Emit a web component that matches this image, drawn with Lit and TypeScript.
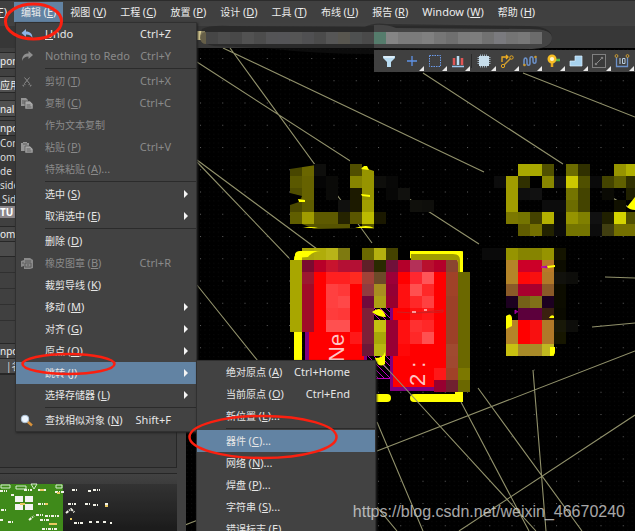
import { LitElement, html, svg, css, nothing } from "lit";
import { customElement, property } from "lit/decorators.js";
import { classMap } from "lit/directives/class-map.js";

interface Item {
  label?: string;
  key?: string;
  text?: string;
  shortcut?: string;
  icon?: string;
  disabled?: boolean;
  arrow?: boolean;
  active?: boolean;
  sep?: boolean;
  children?: Item[];
}

const SEP: Item = { sep: true };

const JUMP: Item[] = [
  { label: "绝对原点", key: "A", shortcut: "Ctrl+Home" },
  { label: "当前原点", key: "O", shortcut: "Ctrl+End" },
  { label: "新位置", key: "L", text: "..." },
  SEP,
  { label: "器件", key: "C", text: "...", active: true },
  { label: "网络", key: "N", text: "..." },
  { label: "焊盘", key: "P", text: "..." },
  { label: "字符串", key: "S", text: "..." },
  { label: "错误标志", key: "E" },
];

const EDIT: Item[] = [
  { text: "Undo", shortcut: "Ctrl+Z", icon: "undo" },
  { text: "Nothing to Redo", shortcut: "Ctrl+Y", icon: "redo", disabled: true },
  SEP,
  { label: "剪切", key: "T", shortcut: "Ctrl+X", icon: "cut", disabled: true },
  { label: "复制", key: "C", shortcut: "Ctrl+C", icon: "copy", disabled: true },
  { label: "作为文本复制", disabled: true },
  { label: "粘贴", key: "P", shortcut: "Ctrl+V", icon: "paste", disabled: true },
  { label: "特殊粘贴", key: "A", text: "...", disabled: true },
  SEP,
  { label: "选中", key: "S", arrow: true },
  { label: "取消选中", key: "E", arrow: true },
  SEP,
  { label: "删除", key: "D" },
  { label: "橡皮图章", key: "B", shortcut: "Ctrl+R", icon: "stamp", disabled: true },
  { label: "裁剪导线", key: "K" },
  { label: "移动", key: "M", arrow: true },
  { label: "对齐", key: "G", arrow: true },
  { label: "原点", key: "O", arrow: true },
  { label: "跳转", key: "J", arrow: true, active: true, children: JUMP },
  { label: "选择存储器", key: "L", arrow: true },
  SEP,
  { label: "查找相似对象", key: "N", shortcut: "Shift+F", icon: "find" },
];

const BAR: Item[] = [
  { label: "编辑", key: "E", active: true, children: EDIT },
  { label: "视图", key: "V" },
  { label: "工程", key: "C" },
  { label: "放置", key: "P" },
  { label: "设计", key: "D" },
  { label: "工具", key: "T" },
  { label: "布线", key: "U" },
  { label: "报告", key: "R" },
  { text: "Window ", key: "W" },
  { label: "帮助", key: "H" },
];

const MENU_ICONS: Record<string, unknown> = {
  undo: svg`<path d="M1.500 5 6 1v2.500c4 0 6.500 2 6.500 7-1-2.500-3-4-6.500-4V9z" fill="#8db4e8"/>`,
  redo: svg`<path d="M13 5 8.500 1v2.500C4 3.500 2 6 2 11c1-3 3-4.500 6.500-4.500V9z" fill="#8f8f8f"/>`,
  cut: svg`<path d="M4.500 2.500l5 6M9.500 2.500l-5 6" stroke="#8a8a8a" stroke-width="1" fill="none"/><path d="M3 11l2-2M11 11 9 9" stroke="#8a8a8a" stroke-width="2" stroke-dasharray="1 1"/>`,
  copy: svg`<path d="M1 1h5l2 2v6H1z" fill="#969696"/><path d="M5 4h5l3 3v5H5z" fill="#a8a8a8" stroke="#444" stroke-width=".6"/><path d="M2 4h3M2 6h3M6.500 8h4M6.500 10h5" stroke="#5c5c5c"/>`,
  paste: svg`<path d="M1 2h2V1h4v1h2v8H1z" fill="#969696"/><path d="M5 5h5l3 3v4H5z" fill="#a8a8a8" stroke="#444" stroke-width=".6"/><path d="M3 3h4M6.500 8h4M6.500 10h5" stroke="#5c5c5c"/>`,
  stamp: svg`<path d="M4 1h6l3 2v8l-3 1H4V9L1 10V4l3-1z" fill="#8a8a8a"/><path d="M5 4h6M5 6h6v4H5zM7 8h2M2 6h2" stroke="#5a5a5a" fill="none"/>`,
  find: svg`<path d="M7.500 7.500 12 11.500" stroke="#d9923a" stroke-width="2.400"/><circle cx="5" cy="5" r="3.800" fill="#eef6ff" stroke="#a9bfd4"/>`,
};

@customElement("menu-panel")
export class MenuPanel extends LitElement {
  @property({ attribute: false }) items: Item[] = [];

  static styles = css`
    :host {
      display: block;
      box-sizing: border-box;
      border: 1px solid #303030;
      background: #424242;
      box-shadow: 1px 1px 2px #222;
    }
    .entry { position: relative; }
    .row {
      display: grid;
      grid-template-columns: 29px 1fr auto 25px;
      align-items: center;
      width: 100%;
      height: 22px;
      padding: 0;
      border: 0;
      background: none;
      color: #e6e6e6;
      font: 11px/20px "Noto Sans", "Noto Sans CJK SC", sans-serif;
      text-align: left;
      white-space: nowrap;
    }
    .row:disabled { color: #8a8a8a; }
    .row.active { background: #6283a3; }
    .cjk { font-size: 10px; }
    .icon { display: block; width: 14px; height: 13px; margin-left: 4px; }
    .arrow { width: 4px; height: 8px; margin-left: 13px; fill: #f4f4f4; }
    .sep { height: 1px; margin: 1px 0 1px 29px; border: 0; background: #2b2b2b; }
    .sub { position: absolute; left: 100%; top: -2px; width: 180px; z-index: 1; }
  `;

  private row(i: Item) {
    if (i.sep) return html`<hr class="sep" />`;
    return html`<div class="entry">
      <button class=${classMap({ row: true, active: !!i.active })} role="menuitem" ?disabled=${i.disabled}>
        <span>${i.icon ? html`<svg class="icon" viewBox="0 0 14 13">${MENU_ICONS[i.icon]}</svg>` : nothing}</span>
        <span>${menuText(i)}</span>
        <span>${i.shortcut ?? nothing}</span>
        ${i.arrow ? html`<svg class="arrow" viewBox="0 0 4 8"><path d="M0 0 4 4 0 8z" /></svg>` : html`<span></span>`}
      </button>
      ${i.children ? html`<menu-panel class="sub" role="menu" .items=${i.children}></menu-panel>` : nothing}
    </div>`;
  }

  render() {
    return this.items.map((i) => this.row(i));
  }
}

function menuText(i: Item) {
  if (i.text === "Undo") return html`<u>U</u>ndo`;
  if (!i.label) return html`${i.text}${i.key ? html`(<u>${i.key}</u>)` : nothing}`;
  return html`<span class="cjk">${i.label}${i.key ? " " : nothing}</span>${i.key ? html`(<u>${i.key}</u>)` : nothing}${i.text ?? nothing}`;
}

/* Toolbar glyphs, drawn on a 16 x 16 grid */
const TOOLS: { name: string; art: unknown }[] = [
  { name: "Filter", art: svg`<path d="M2 3h12v2l-4 4v5H6V9L2 5z" fill="#b9dcf2"/><path d="M3 4h10" stroke="#fff"/>` },
  { name: "Cross", art: svg`<path d="M8 3v10M3 8h10" stroke="#5f92e6" stroke-width="1.300"/>` },
  { name: "Select area", art: svg`<rect x="2.500" y="2.500" width="11" height="11" fill="none" stroke="#6b9bea" stroke-dasharray="1.500 1"/>` },
  { name: "Align", art: svg`<path d="M2 13.500h12" stroke="#9cc6ee" stroke-width="1.500"/><path d="M4 5v7M12 5v7" stroke="#e05656" stroke-width="2.500"/><path d="M8 3v9" stroke="#b9dcf2" stroke-width="2.500"/>` },
  { name: "Component", art: svg`<path d="M4.500 1.500v13M6.500 1.500v13M8.500 1.500v13M10.500 1.500v13M1.500 4.500h13M1.500 6.500h13M1.500 8.500h13M1.500 10.500h13" stroke="#a9bcc8" stroke-width=".9"/><rect x="3" y="3" width="10" height="10" fill="#c6dcea"/>` },
  { name: "Route", art: svg`<path d="M3 9V4h6M7 2l2 2-2 2" fill="none" stroke="#f0ae22" stroke-width="1.300"/><path d="M4 13 12 5" stroke="#cc9d35" stroke-width="1.500"/><circle cx="4" cy="13" r="1.700" fill="#424242" stroke="#e5a820"/><circle cx="12.500" cy="4.500" r="1.700" fill="#424242" stroke="#e5a820"/>` },
  { name: "Tune", art: svg`<path d="M2 12V8c0-4 3-4 3 0v2c0 3 3 3 3 0V6c0-3 3-3 3 0v2c0 3 3 3 3 0V5" fill="none" stroke="#6c91c9" stroke-width="1.500"/><circle cx="2.500" cy="12" r="1.300" fill="#c99a32"/><circle cx="13.500" cy="4" r="1.300" fill="#c99a32"/>` },
  { name: "Via", art: svg`<path d="M8 7h7" stroke="#57b947" stroke-width="2.500"/><path d="M7 9v5" stroke="#e5a820" stroke-width="2.500"/><circle cx="7" cy="6" r="3.300" fill="#fff7d0" stroke="#f6bd24" stroke-width="2.400"/>` },
  { name: "Polygon", art: svg`<path d="M2 8h5V3h7v10H2z" fill="#a7d2ee" stroke="#d8efff" stroke-width=".7"/>` },
  { name: "Line", art: svg`<rect x="1.500" y="1.500" width="13" height="13" fill="#3a3a3a" stroke="#808080"/><path d="M5 11l6-6" stroke="#8a8a8a"/><circle cx="5" cy="11" r="1.300" fill="#808080"/><circle cx="11" cy="5" r="1.300" fill="#808080"/>` },
  { name: "Dimension", art: svg`<path d="M2.500 4v9.500h11V4" fill="none" stroke="#6c91c9" stroke-width="1.300"/><circle cx="2.500" cy="3" r="1.400" fill="none" stroke="#c99a32"/><circle cx="13.500" cy="3" r="1.400" fill="none" stroke="#c99a32"/><path d="M6 5v6M8.500 5.500h2.500v5H8.500z" fill="none" stroke="#b9cde0"/>` },
];

/* Tile runs on a 12px lattice: x, y, then a colour per tile ("-" leaves a gap) */
type Run = [number, number, string];
const TILES: Run[] = [
  [290, 164, "484600 6a6600 0e0e0c - - 504e00 969400"],
  [290, 176, "5a5800 666200 050505 0a0a08 - 868400 969400 0e0e0b 080807"],
  [290, 188, "4f4d00 666200 - 0a0a08 - 1c1a00 969400 - 070706 11110e"],
  [290, 200, "4b4900 5e5c00 - - 10100e 1c1a00 a09e00 - - - 10100c 0e0e0b"],
  [290, 212, "605e00 a09c00 5e5a00 5e5a00 252300 5a5600 bcba00 1a1800"],
  [302, 248, "aaa60a b0ac0a b8b418 7e7a10 000000 6a6800 b4b00f 444200 000000"],
  [290, 260, "a8a600 7a0b30 b80028 c8142e b41034 b41034 5e2028 2a2a00 70103a b4002a b43058 b8102e b4002a 8a4430"],
  [290, 272, "a8a600 9c1830 ff0000 ff2020 ff2020 ff2a20 a04238 6c4a28 9c0038 ff0000 ff2830 ff5558 ff0000 a04228 6b6800"],
  [290, 284, "a8a600 a00c28 ff0000 ff4040 ff3838 ff0000 903c40 a88e20 940034 ff1010 ff5050 ff2828 ff0000 a04228 6b6800"],
  [290, 296, "a8a600 a00c28 ff0000 ff4040 ff4848 ff0000 700a3c aca014 98002e ff1010 ff2828 ff4040 ff0000 9c4028 6b6800"],
  [290, 308, "a8a600 a00c28 ff0000 ff3c3c ff3838 ff0000 7c2038 - - ff0000 ff1010 ff1818 ff0000 9c4028 6b6800"],
  [290, 320, "a8a600 a00c28 ff0000 ff5050 ff5050 ff0000 7c2038 c4c010 980034 ff1010 ff3030 ff2828 ff0000 9c4028 6b6800"],
  [350, 332, "ff1818 7c2038 a8a808 980034 ff1010 ff2828 ff5050 ff0000 9c4028 6b6800"],
  [362, 344, "6c1838 b8b810 980034 ff0808 ff0000 ff0000 ff0000 a04a30 6b6800"],
  [446, 356, "a04830 6b6800"],
  [434, 368, "ff1818 a04228 7c7800"],
  [434, 380, "980030 702030 6b6800"],
  [518, 164, "a8a800 a8a800 505000 - 6c6c00 303000 - - 969400 b0b000"],
  [494, 176, "0c0c0c a09c00 303000 000000 888600 111111 ccc800 505000 0a0a0a 444400 606000 303000"],
  [506, 188, "a09c00 0e0e0e 111111 - - 747400 444400 - 0a0a04 - 202000"],
  [506, 200, "a09c00 - - 0c0c0c 0c0c0c 6c6c00 444400 - - 101000"],
  [506, 212, "7c7800 747400 444200 b4b000 0a0a08 969400 808000 111111 202000 d4d400 505000"],
  [518, 224, "605c00 747000 222200 0a0a0a 747400 747400 0c0c0c 403e10 747000 747000"],
  [482, 248, "0a0a0a 0a0a0a 969400 868400 868400 969400 141400"],
  [506, 260, "b48428 cc0028 cc0028 b87828 0c0c00"],
  [506, 272, "b48428 ff0808 f81010 b07828 11110c 0d0d0a"],
  [506, 284, "8a5a28 a8002e a8002e 8a5a28 0c0c00"],
  [506, 296, "1c0020 746018 807018 1c0020 0c0c00"],
  [518, 308, "5c003c 5c003c 3a2010 0a0a00"],
  [506, 320, "b48428 ff0000 f81010 b07828 181808 0d0d0a"],
  [506, 332, "b48428 ff0000 f81010 b07828 161600"],
  [506, 344, "c8c010 a88a28 a88a28 c0b820"],
];

const tiles = (runs: Run[]) =>
  runs.map(([x, y, c]) =>
    c.split(" ").map((fill, n) =>
      fill === "-" ? nothing : svg`<rect x=${x + n * 12} y=${y} width="12" height="12" fill=${"#" + fill} />`,
    ),
  );

/* Unrouted connections */
const WIRES = `M223 48 484 172M230 48 372 243M197 62 479 244M197 160 317 249M197 162 289 258M197 285 258 361
M423 73 563 164M523 73 635 117M611 197 630 208M605 277 635 278M592 327 635 323M377 451 635 351M533 370 546 531
M478 388 582 531M461 402 529 531M382 363 536 531M377 422 423 531M377 507 397 531M459 531 635 415M185 525 198 520`;

@customElement("board-view")
export class BoardView extends LitElement {
  static styles = css`
    :host { display: block; background: #000; overflow: hidden; }
    .art { display: block; width: 100%; height: 100%; }
    .net { font: 22px "Liberation Sans", sans-serif; fill: #ffc4c4; }
  `;

  render() {
    return html`<svg class="art" viewBox="186 48 449 483" preserveAspectRatio="xMinYMin slice">
      <defs>
        <pattern id="dots" x="200" y="58" width="22.250" height="22.250" patternUnits="userSpaceOnUse">
          <rect width="1" height="1" fill="#5c5c5c" />
        </pattern>
        <pattern id="fine" x="200" y="58" width="4.450" height="4.450" patternUnits="userSpaceOnUse">
          <rect width="1" height="1" fill="#0b0b0b" />
        </pattern>
        <pattern id="hatch" width="6" height="6" patternUnits="userSpaceOnUse">
          <path d="M0 0 6 6" stroke="#c000c0" stroke-width="1" />
        </pattern>
      </defs>
      <rect x="186" y="48" width="1200" height="900" fill="url(#fine)" />
      <rect x="186" y="48" width="1200" height="900" fill="url(#dots)" />
      <path d="M298 394V260q0-5 5-5h20M413 255h42q4 0 4 4v139h-45M387 398H298v-6" fill="none" stroke="#ff0" stroke-width="8" stroke-linecap="round" />
      <rect x="305" y="262" width="63" height="130" fill="#800080" />
      <rect x="309" y="262" width="55" height="130" fill="#f00" />
      <rect x="367" y="300" width="23" height="79" fill="#000" />
      <rect x="367" y="300" width="23" height="79" fill="url(#hatch)" />
      <path d="M367 378.500h24" stroke="#c000c0" />
      <path d="M390 300h63v91h-63z" fill="#800080" />
      <path d="M393 300h60v87h-60z" fill="#f00" />
      <path d=${WIRES} fill="none" stroke="#91916b" stroke-width="1.100" />
      ${tiles(TILES)}
      <path d="M286 160h16l14 5-26 4zM290 193l12 3-3 6-9 3zM350 164h12v3l12 4v-7h4v-4h-28z" fill="#000" />
      <path d="M290 224h12l12 5 48-1 12 1v-5h-12v4h-12v-4z" fill="#565300" />
      <path d="M361 169l3-3h3l2 4zM298 199l7 1v2h-6zM361 194l9 1v2l-8-1zM303 228q8-2 15 0zM355 228q12-4 19 0z" fill="#ff0" />
      <path d="M295 258v-4q1-3 5-3h21q-8 0-13 6z" fill="#ff0" />
      <path d="M410 248h53v24h-5v-9q0-6-6-6h-42z" fill="#ff0" />
      <path d="M411 254h42q7 0 7 6v12h-2v-12h-47z" fill="#a09c00" />
      <path d="M410 247h55v7q0-3-4-3h-51z" fill="#000" />
      <path d="M372 312q10-8 14 5-8 0-14-5zM375 358q8 0 10-6v12q-7 5-10-6zM506 316q5-4 6 2v8l-6 3zM549 318q2-4 5-2v2zM550 356v-9h5v5q0 4-5 4z" fill="#ff0" />
      <path d="M627 207 635 197v13q-5 0-8-3z" fill="#ff0" />
      <path d="M397 312l18 1 28-3v2l-30 1" fill="none" stroke="#d02020" />
      <path d="M412 312h4M424 310h3" stroke="#ffc4c4" stroke-width="1.500" />
      <path d="M541 267l6-1v2zM515 314v-4l3 2" fill="#800080" stroke="#c000c0" stroke-width=".8" />
      <path d="M547 266l8-1v2l-7 1z" fill="#ff0" />
      <text class="net" transform="translate(344 362) rotate(-90)">Ne</text>
      <text class="net" transform="translate(425 386) rotate(-90)">2 :</text>
    </svg>`;
  }
}

const PARTS_MARKS = `M1 485h9v3H1zM16 486h10v3H16zM31 484l6 0-3 5zM56 485h6v3h-6z`;
const BOARD_SPECKS = `M0 491h7M24 490h8M38 490h8M55 492h9M38 504h10M11 495h3M1 510h6M0 520h3M8 522h5M29 520l5-4M36 515h7M45 516h14M40 520h10
M72 490h6M88 491h3M93 490h7M68 504h8M85 504h6M93 505h6M105 504h3M66 513l5-4 4 4M74 523h9M89 522h4M96 522h4M103 522h3M110 523h2M42 529h16`;

@customElement("app-root")
export class AppRoot extends LitElement {
  static styles = css`
    :host {
      position: relative;
      display: grid;
      grid-template-rows: 23px 25px 1fr;
      height: 100vh;
      overflow: hidden;
      background: #383838;
      color: #dcdcdc;
      font: 11px/14px "Noto Sans", "Noto Sans CJK SC", sans-serif;
    }
    .bar {
      display: flex;
      align-items: stretch;
      box-sizing: border-box;
      padding: 1px 0;
      background: #404040;
      border-top: 1px solid #2c2c2c;
      position: relative;
      z-index: 3;
    }
    .drop { position: relative; }
    .top {
      height: 100%;
      padding: 0 7px;
      border: 0;
      background: none;
      color: #ececec;
      font: inherit;
      white-space: nowrap;
    }
    .first { width: 14px; padding: 0; overflow: hidden; direction: rtl; unicode-bidi: isolate; }
    .first-text { direction: ltr; unicode-bidi: isolate; margin-right: 7px; }
    .top.active { background: #6283a3; }
    .cjk { font-size: 10px; }
    .menu { position: absolute; left: 1px; top: 100%; width: 182px; }
    .strip { background: #373737; border-top: 3px solid #414141; box-sizing: border-box; }
    .main { display: grid; grid-template-columns: 186px 1fr; min-height: 0; }
    .side {
      display: flex;
      flex-direction: column;
      box-sizing: border-box;
      padding-right: 9px;
      background: #404040;
      overflow: hidden;
      white-space: nowrap;
    }
    .field {
      box-sizing: border-box;
      width: 100%;
      height: 17px;
      margin: 4px 0 3px;
      padding: 0;
      border: 1px solid #272727;
      border-left: 0;
      background: #505050;
      color: #f0f0f0;
      font: inherit;
      font-size: 10px;
      line-height: 14px;
      text-align: left;
    }
    .head {
      height: 14px;
      border-top: 1px solid #272727;
      border-bottom: 1px solid #272727;
      background: #454545;
      color: #f0f0f0;
      font-size: 10px;
    }
    .list { margin: 0; padding: 0; list-style: none; font-size: 10px; background: #383838; }
    .indent { padding-left: 2px; }
    .picked { background: #8b868a; color: #fff; font-weight: 700; line-height: 12px; }
    .gap { height: 8px; }
    .cols { height: 14px; padding-left: 6px; background: #4c4c4c; border-bottom: 1px solid #272727; font-size: 10px; }
    .line { height: 15px; border-bottom: 1px solid #303030; }
    .tail { height: 22px; }
    .fill { flex: 1; min-height: 0; background: #3c3c3c; border: 1px solid #272727; border-left: 0; }
    .map { display: block; flex: none; width: 100%; height: 57px; margin-top: 5px; border-top: 1px solid #262626; background: linear-gradient(#424242, #202020); }
    .board { min-width: 0; min-height: 0; }
    .tools {
      position: absolute;
      z-index: 2;
      top: 50px;
      left: 374px;
      right: 0;
      display: flex;
      height: 22px;
      padding-left: 4px;
      background: #404040;
      overflow: hidden;
    }
    .tool { flex: none; position: relative; width: 23px; height: 22px; padding: 3px; border: 0; background: none; }
    .glyph { display: block; width: 16px; height: 16px; }
    .more { position: absolute; right: 0; bottom: 1px; width: 5px; height: 5px; fill: #e8e8e8; }
    .split { flex: none; width: 1px; margin: 4px 1px; background: #2a2a2a; }
    .notes { position: absolute; left: 0; top: 0; width: 635px; height: 531px; pointer-events: none; }
    .under { z-index: 2; }
    .over { z-index: 4; }
    .credit {
      position: absolute;
      z-index: 4;
      right: 10px;
      bottom: 9px;
      font: 16px/20px "Liberation Sans", sans-serif;
      color: rgba(225, 225, 225, 0.75);
    }
  `;

  private smear = (
    "464646 4c4c4c 484848 525252 4c4c4c 545456 545457 555555 505052 4b4b4b 565656 58564f 4e5050 4a4a4a " +
    "557c6c 858585 7b7b7b 7b7b7b 808080 767676 6f6f6f 7b7b7b 7d7d7d 717171 7a7a7e 747474 787878 6b6b6b"
  ).split(" ");

  render() {
    return html`
      <nav class="bar">
        <button class="top first"><span class="first-text">(<u>F</u>)</span></button>
        ${BAR.map(
          (i) => html`<div class="drop">
            <button class=${classMap({ top: true, active: !!i.active })}>${menuText(i)}</button>
            ${i.children ? html`<menu-panel class="menu" role="menu" .items=${i.children}></menu-panel>` : nothing}
          </div>`,
        )}
      </nav>
      <div class="strip"></div>
      <div class="main">
        <aside class="side">
          <button class="field">pon</button>
          <button class="field">应用</button>
          <button class="field">nal</button>
          <div class="head">npo</div>
          <ul class="list">
            <li>Com</li>
            <li>om</li>
            <li>de B</li>
            <li>side</li>
            <li class="indent">Sid</li>
            <li class="picked">TU</li>
          </ul>
          <div class="gap"></div>
          <div class="head">omp</div>
          <div class="cols"></div>
          <div class="line"></div>
          <div class="line"></div>
          <div class="line"></div>
          <div class="line"></div>
          <div class="tail"></div>
          <div class="head">npo</div>
          <div class="cols">|名</div>
          <div class="fill"></div>
          <svg class="map" viewBox="0 474 177 57" preserveAspectRatio="xMinYMin slice">
            <rect x="0" y="484" width="63" height="50" fill="#3f8a1a" />
            <rect x="63" y="484" width="114" height="50" fill="#000" opacity=".15" />
            <path d=${PARTS_MARKS} fill="none" stroke="#d6ecd0" />
            <path d="M15 496h8v6h-8zM25 496h8v6h-8zM15 504h8v6h-8zM25 504h8v6h-8z" fill="#f4f4f4" />
            <path d=${BOARD_SPECKS} fill="none" stroke="#f2f2e8" stroke-width="2" stroke-dasharray="3 1 1 1" />
            <path d="M40 490h4M45 504h3M57 493h3M49 524h8M70 519h2M105 506h3M20 504h5" stroke="#e8c860" stroke-width="2" />
          </svg>
        </aside>
        <board-view class="board"></board-view>
      </div>
      <svg class="notes under" viewBox="0 0 635 531">
        <path d="M197 31h8v9h-8z" fill="#d9cc92" />
        <path d="M202 29q8-4 28-3l135 1q8-5 22-3l140 2q25 0 25 12 0 10-18 12H374v4q-60 0-110-6l-50-2q-12-2-14-10z" fill="#1b1b1b" opacity=".45" />
        <path d="M374 25q12-1 22 3l130 1q26-1 26 9 0 10-20 11l-158-1z" fill="#444" />
        <path d="M200 38q1-6 6-6v12q-5 0-6-6z" fill="#665f48" />
        ${this.smear.map((c, n) => svg`<rect x=${206 + n * 12} y="32" width="12" height="12" fill=${"#" + c} />`)}
      </svg>
      <div class="tools" role="toolbar">
        ${TOOLS.map(
          (t, n) => html`${n === 4 ? html`<span class="split"></span>` : nothing}
            <button class="tool" aria-label=${t.name}>
              <svg class="glyph" viewBox="0 0 16 16">${t.art}</svg>
              ${n ? html`<svg class="more" viewBox="0 0 5 5"><path d="M5 0v5H0z" /></svg>` : nothing}
            </button>`,
        )}
      </div>
      <svg class="notes over" viewBox="0 0 635 531" fill="none" stroke="#fb2010" stroke-width="3">
        <ellipse cx="33.500" cy="21.500" rx="28" ry="17.500" />
        <ellipse cx="68.500" cy="364" rx="46" ry="10" stroke-width="2.500" />
        <ellipse cx="263" cy="437" rx="73.500" ry="21" stroke-width="2.500" />
      </svg>
      <div class="credit">https://blog.csdn.net/weixin_46670240</div>
    `;
  }
}
